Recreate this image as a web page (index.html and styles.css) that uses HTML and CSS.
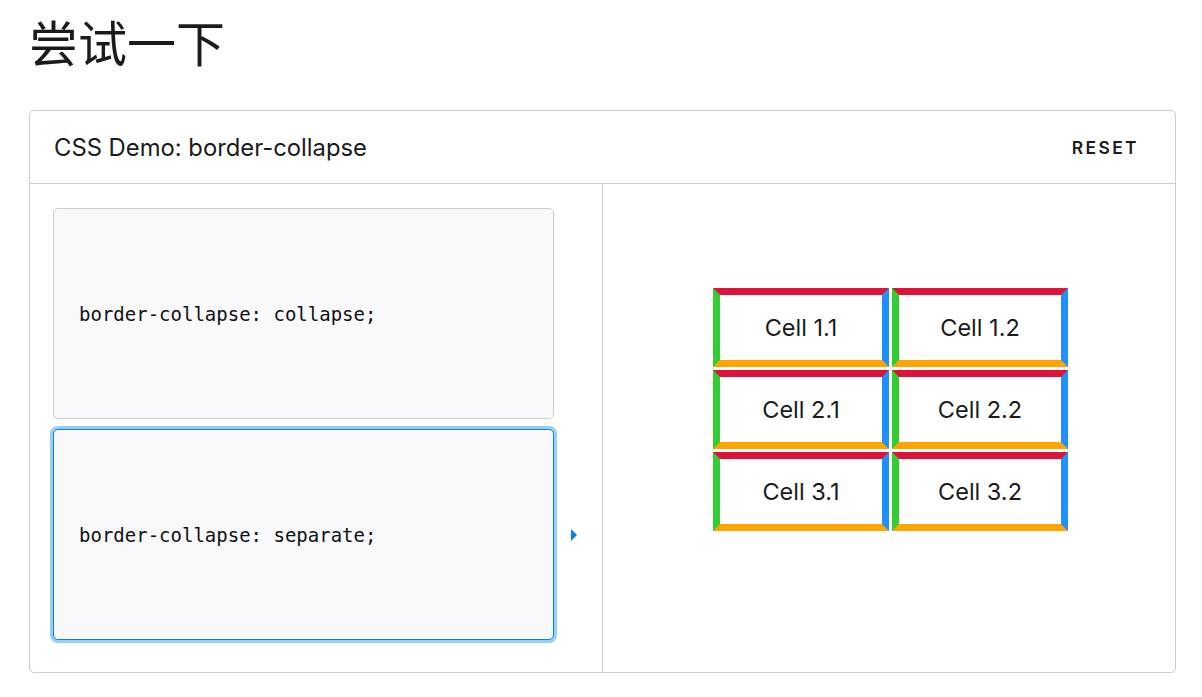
FILE: index.html
```html
<!DOCTYPE html>
<html lang="zh-CN">
<head>
<meta charset="utf-8">
<title>尝试一下</title>
<link rel="stylesheet" href="styles.css">
</head>
<body>
<main class="page">
  <h2 class="title">尝试一下</h2>
  <section class="demo">
    <header class="demo-header">
      <h3 class="demo-title">CSS Demo: border-collapse</h3>
      <button class="reset">RESET</button>
    </header>
    <div class="demo-body">
      <div class="choices">
        <div class="choice-row">
          <div class="choice"><code>border-collapse: collapse;</code></div>
          <span class="marker"></span>
        </div>
        <div class="choice-row">
          <div class="choice selected"><code>border-collapse: separate;</code></div>
          <span class="marker">
            <svg width="6" height="12" viewBox="0 0 6 12"><path d="M0 0 L6 6 L0 12 Z" fill="#0b7de8"/></svg>
          </span>
        </div>
      </div>
      <div class="output">
        <table class="sample">
          <tr><td>Cell 1.1</td><td>Cell 1.2</td></tr>
          <tr><td>Cell 2.1</td><td>Cell 2.2</td></tr>
          <tr><td>Cell 3.1</td><td>Cell 3.2</td></tr>
        </table>
      </div>
    </div>
  </section>
</main>
</body>
</html>
```
FILE: styles.css
```css
html, body {
  margin: 0;
  padding: 0;
  background: #ffffff;
}
body {
  font-family: Inter, "Noto Sans", "Noto Sans CJK SC", sans-serif;
  color: #1b1b1b;
}
.page {
  padding: 0 26px 0 29px;
}
.title {
  margin: 0;
  padding-top: 14px;
  height: 110px;
  box-sizing: border-box;
  font-family: Inter, "Noto Sans CJK SC", sans-serif;
  font-size: 49px;
  font-weight: 400;
  line-height: 62px;
  letter-spacing: 0;
}
.demo {
  border: 1px solid #cdcdcd;
  border-radius: 5px;
  height: 563px;
  box-sizing: border-box;
  display: flex;
  flex-direction: column;
}
.demo-header {
  height: 72px;
  flex: none;
  border-bottom: 1px solid #cdcdcd;
  display: flex;
  align-items: center;
  justify-content: space-between;
  padding: 0 36px 0 24px;
}
.demo-title {
  margin: 0;
  font-size: 23.8px;
  font-weight: 400;
}
.reset {
  border: 0;
  background: none;
  padding: 0;
  font-family: Inter, sans-serif;
  font-size: 17.4px;
  font-weight: 600;
  letter-spacing: 2.4px;
  color: #1b1b1b;
}
.demo-body {
  flex: 1;
  display: flex;
}
.choices {
  width: 573px;
  flex: none;
  box-sizing: border-box;
  border-right: 1px solid #cdcdcd;
  padding: 24px 0 0 23px;
  display: flex;
  flex-direction: column;
  gap: 10px;
}
.choice-row {
  display: flex;
  align-items: center;
}
.choice {
  width: 501px;
  height: 211px;
  box-sizing: border-box;
  background: #f9f9fb;
  border: 1px solid #cdcdcd;
  border-radius: 5px;
  display: flex;
  align-items: center;
  padding-left: 25px;
}
.choice.selected {
  border-color: #0a7ef0;
  box-shadow: 0 0 0 3px #97cff7;
}
.choice code {
  font-family: "DejaVu Sans Mono", monospace;
  font-size: 19px;
  color: #111111;
}
.marker {
  margin-left: 17px;
  width: 6px;
  height: 12px;
  display: flex;
}
.output {
  flex: 1;
  display: flex;
  justify-content: center;
  align-items: flex-start;
  padding: 104px 0 0 3px;
}
.sample {
  border-collapse: separate;
  border-spacing: 3px;
  margin: -3px;
  table-layout: fixed;
}
.sample td {
  width: 162px;
  height: 65px;
  border: 7px solid;
  border-color: crimson dodgerblue orange limegreen;
  padding: 0;
  text-align: center;
  font-size: 23.5px;
  color: #1b1b1b;
}
```
